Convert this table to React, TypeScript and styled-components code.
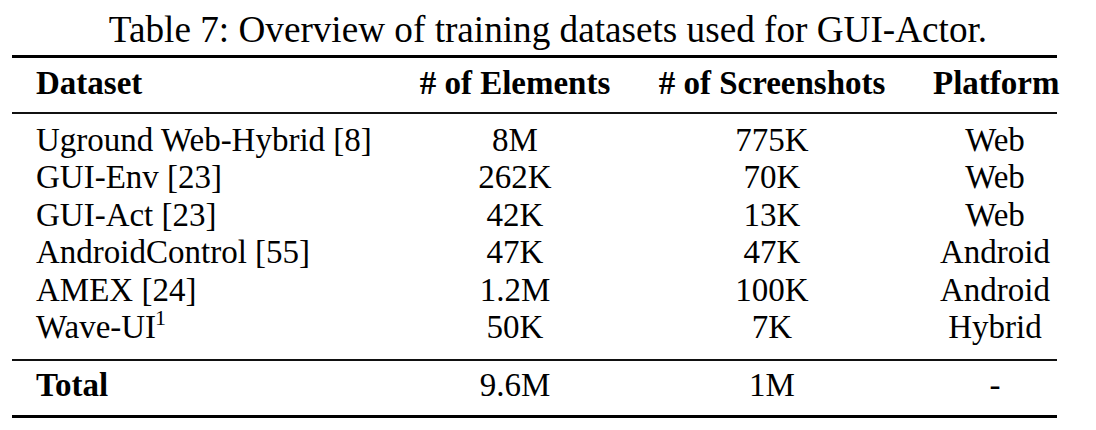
import React from "react";
import styled, { createGlobalStyle } from "styled-components";

const GlobalStyle = createGlobalStyle`
  html, body {
    margin: 0;
    padding: 0;
    background: #ffffff;
  }
  body {
    font-family: "Liberation Serif", "Times New Roman", serif;
    color: #000000;
    -webkit-font-smoothing: antialiased;
  }
`;

const Page = styled.div`
  width: 1096px;
  height: 430px;
  box-sizing: border-box;
  padding: 8px 0 0 0;
  background: #ffffff;
`;

const Caption = styled.div`
  width: 1096px;
  text-align: center;
  font-size: 37.2px;
  line-height: 44px;
  height: 47px;
`;

const Table = styled.div`
  width: 1045px;
  margin-left: 12px;
  border-top: 3px solid #000;
  border-bottom: 3px solid #000;
`;

const Section = styled.div<{ $pt: number; $pb: number; $rule?: boolean }>`
  padding-top: ${(p) => p.$pt}px;
  padding-bottom: ${(p) => p.$pb}px;
  border-bottom: ${(p) => (p.$rule ? "2px solid #111" : "none")};
`;

const Row = styled.div<{ $bold?: boolean }>`
  display: grid;
  grid-template-columns: 375px 256px 258px 156px;
  font-size: 33px;
  line-height: 37.5px;
  font-weight: ${(p) => (p.$bold ? 700 : 400)};
  white-space: nowrap;
`;

const Cell = styled.div<{ $align?: "left" | "center"; $pl?: number; $bold?: boolean }>`
  text-align: ${(p) => p.$align ?? "center"};
  padding-left: ${(p) => p.$pl ?? 0}px;
  ${(p) => (p.$bold ? "font-weight: 700;" : "")}
`;

const Sup = styled.sup`
  font-size: 22px;
  line-height: 0;
  vertical-align: baseline;
  position: relative;
  top: -0.6em;
  margin-left: -1px;
`;

type Entry = { name: React.ReactNode; elements: string; shots: string; platform: string };

const rows: Entry[] = [
  { name: "Uground Web-Hybrid [8]", elements: "8M", shots: "775K", platform: "Web" },
  { name: "GUI-Env [23]", elements: "262K", shots: "70K", platform: "Web" },
  { name: "GUI-Act [23]", elements: "42K", shots: "13K", platform: "Web" },
  { name: "AndroidControl [55]", elements: "47K", shots: "47K", platform: "Android" },
  { name: "AMEX [24]", elements: "1.2M", shots: "100K", platform: "Android" },
  {
    name: (
      <>
        Wave-UI<Sup>1</Sup>
      </>
    ),
    elements: "50K",
    shots: "7K",
    platform: "Hybrid",
  },
];

function TableRow({
  bold,
  boldFirst,
  cells,
}: {
  bold?: boolean;
  boldFirst?: boolean;
  cells: React.ReactNode[];
}) {
  return (
    <Row $bold={bold}>
      <Cell $align="left" $pl={24} $bold={boldFirst}>
        {cells[0]}
      </Cell>
      <Cell>{cells[1]}</Cell>
      <Cell>{cells[2]}</Cell>
      <Cell $pl={32}>{cells[3]}</Cell>
    </Row>
  );
}

export default function App() {
  return (
    <>
      <GlobalStyle />
      <Page>
        <Caption>Table 7: Overview of training datasets used for GUI-Actor.</Caption>
        <Table>
          <Section $pt={7} $pb={9} $rule>
            <TableRow bold cells={["Dataset", "# of Elements", "# of Screenshots", "Platform"]} />
          </Section>
          <Section $pt={8} $pb={12} $rule>
            {rows.map((r, i) => (
              <TableRow key={i} cells={[r.name, r.elements, r.shots, r.platform]} />
            ))}
          </Section>
          <Section $pt={6} $pb={11}>
            <TableRow boldFirst cells={["Total", "9.6M", "1M", "-"]} />
          </Section>
        </Table>
      </Page>
    </>
  );
}
